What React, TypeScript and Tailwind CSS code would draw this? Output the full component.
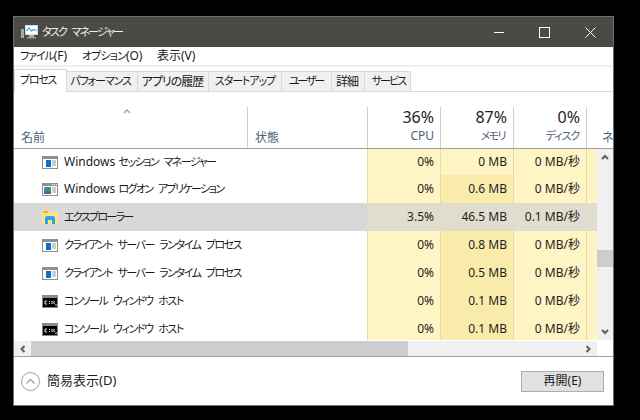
import type { ReactNode } from "react";

const font = "font-['Noto_Sans','Noto_Sans_CJK_JP',sans-serif] [font-feature-settings:'palt']";

const tabs = [
  { label: "パフォーマンス", width: "w-[71px]", track: "text-[11px] tracking-[-1.1px] pr-[3px]" },
  { label: "アプリの履歴", width: "w-[71px]", track: "tracking-[-1px] pr-[1px]" },
  { label: "スタートアップ", width: "w-[73px]", track: "text-[11px] tracking-[-1.1px]" },
  { label: "ユーザー", width: "w-[50px]", track: "text-[11px] tracking-[-2.1px] pr-[1px]" },
  { label: "詳細", width: "w-[33px]", track: "tracking-[-1px] pr-[2px]" },
  { label: "サービス", width: "w-[46px]", track: "text-[11px] tracking-[-1.9px] pl-[2px]" },
];

type Row = {
  prefix?: string;
  name: string;
  track: string;
  icon: "app" | "logon" | "folder" | "console";
  cpu: string;
  mem: string;
  disk: string;
  memDark?: boolean;
  selected?: boolean;
  height: string;
};

const rows: Row[] = [
  { prefix: "Windows ", name: "セッション マネージャー", track: "tracking-[-1.5px]", icon: "app", cpu: "0%", mem: "0 MB", disk: "0 MB/秒", height: "h-[26px]" },
  { prefix: "Windows ", name: "ログオン アプリケーション", track: "tracking-[-1.6px]", icon: "logon", cpu: "0%", mem: "0.6 MB", disk: "0 MB/秒", memDark: true, height: "h-[28px]" },
  { name: "エクスプローラー", track: "tracking-[-1.7px]", icon: "folder", cpu: "3.5%", mem: "46.5 MB", disk: "0.1 MB/秒", selected: true, height: "h-[28px]" },
  { name: "クライアント サーバー ランタイム プロセス", track: "tracking-[-1.5px]", icon: "app", cpu: "0%", mem: "0.8 MB", disk: "0 MB/秒", memDark: true, height: "h-[28px]" },
  { name: "クライアント サーバー ランタイム プロセス", track: "tracking-[-1.5px]", icon: "app", cpu: "0%", mem: "0.5 MB", disk: "0 MB/秒", memDark: true, height: "h-[28px]" },
  { name: "コンソール ウィンドウ ホスト", track: "tracking-[-1.4px]", icon: "console", cpu: "0%", mem: "0.1 MB", disk: "0 MB/秒", memDark: true, height: "h-[28px]" },
  { name: "コンソール ウィンドウ ホスト", track: "tracking-[-1.4px]", icon: "console", cpu: "0%", mem: "0.1 MB", disk: "0 MB/秒", memDark: true, height: "h-[28px]" },
];

function RowIcon({ kind }: { kind: Row["icon"] }) {
  if (kind === "folder") {
    return (
      <svg width="16" height="14" viewBox="0 0 16 14">
        <path d="M0 0h6l1.500 2H16v12H0z" fill="#fce08c" />
        <rect x="1" y="1" width="5" height="2" fill="#e6b32e" />
        <path d="M3 14V7.500L4.500 6h7L13 7.500V14h-3v-4H6v4z" fill="#2ba4e6" />
      </svg>
    );
  }
  if (kind === "console") {
    return (
      <svg width="16" height="13" viewBox="0 0 16 13">
        <rect width="16" height="13" fill="#8a8a8a" />
        <rect x="1" y="3" width="14" height="9" fill="#000" />
        <path d="M3 6H5M3 6V9H5M7 6.500h1M7 8.500h1M10 6v3M12 6v3M13 10h2" stroke="#e6e6e6" strokeWidth="1" fill="none" />
      </svg>
    );
  }
  return (
    <svg width="16" height="13" viewBox="0 0 16 13">
      <rect width="16" height="13" fill="#8f8f8f" />
      <rect x="1" y="3" width="14" height="9" fill="#fff" />
      {kind === "logon" ? (
        <>
          <rect x="2" y="4" width="7" height="4" fill="#3f8f8a" />
          <rect x="2" y="8" width="7" height="3" fill="#3c6fa8" />
          <rect x="10" y="1" width="1" height="1" fill="#fff" />
          <rect x="12" y="1" width="1" height="1" fill="#fff" />
          <rect x="14" y="1" width="1" height="1" fill="#fff" />
        </>
      ) : (
        <rect x="4" y="4" width="5" height="7" fill="#0b6fd0" />
      )}
      <path d="M10 5h4M10 7h4M10 9h4" stroke="#9a9a9a" strokeWidth="1" />
    </svg>
  );
}

function Chevron({ dir, color = "#606060", weight = 2 }: { dir: "up" | "down" | "left" | "right"; color?: string; weight?: number }) {
  const d = {
    up: "M2 7l3-3 3 3",
    down: "M2 3l3 3 3-3",
    left: "M6.500 2L3.500 5l3 3",
    right: "M3.500 2l3 3-3 3",
  }[dir];
  return (
    <svg width="10" height="10" viewBox="0 0 10 10">
      <path d={d} fill="none" stroke={color} strokeWidth={weight} />
    </svg>
  );
}

function HeaderCell({ pct, label, track = "text-[12px]" }: { pct: string; label: string; track?: string }) {
  return (
    <div className="w-[73px] h-full shrink-0 border-r border-[#d0d0d0] pr-[6px] flex flex-col items-end">
      <span className="text-[16px] leading-[20px] text-[#1e1e1e]">{pct}</span>
      <span className={`mt-[2px] leading-[14px] text-[#4c607a] ${track}`}>{label}</span>
    </div>
  );
}

function Cell({ children, bg, line }: { children: ReactNode; bg: string; line: string }) {
  return (
    <div className={`w-[73px] ${bg} ${line} h-full shrink-0 border-r pr-[6px] flex items-center justify-end text-[12px] text-[#1e1e1e]`}>
      {children}
    </div>
  );
}

export default function App() {
  return (
    <div className={`${font} w-[640px] h-[420px] bg-black pt-[16px] pl-[13px] overflow-hidden`}>
      <div className="w-[601px] h-[390px] border border-[#6f6f6f] bg-white flex flex-col">
        {/* Title bar */}
        <div className="h-[30px] shrink-0 bg-[#4b4a47] flex items-center text-[#f2f2f2]">
          <svg className="ml-[7px]" width="17" height="16" viewBox="0 0 17 16">
            <rect x="0" y="5" width="3" height="9" fill="#a8a8a8" />
            <rect x="1" y="6" width="1" height="2" fill="#6fd36f" />
            <rect x="4" y="1" width="13" height="10" fill="#d8d8d8" />
            <rect x="5" y="2" width="11" height="8" fill="#ffffff" />
            <path d="M5.500 7l2.500-3 2.500 3 2-1.500 3 1" fill="none" stroke="#2b8fd8" strokeWidth="1.100" />
            <rect x="8" y="11" width="5" height="2" fill="#b0b0b0" />
            <rect x="6" y="13" width="9" height="1.500" fill="#9a9a9a" />
          </svg>
          <span className="ml-[4px] text-[11px] tracking-[-1.7px] [word-spacing:4px]">タスク マネージャー</span>
          <div className="ml-auto flex items-center">
            <div className="w-[44px] flex justify-center">
              <div className="w-[10px] h-px bg-white" />
            </div>
            <div className="w-[46px] flex justify-center">
              <div className="w-[11px] h-[11px] border border-white" />
            </div>
            <div className="w-[46px] flex justify-center">
              <svg width="11" height="11" viewBox="0 0 11 11">
                <path d="M.5.500l10 10M10.500.500l-10 10" stroke="#fff" strokeWidth="1" />
              </svg>
            </div>
          </div>
        </div>

        {/* Menu */}
        <div className="h-[18px] shrink-0 flex items-center text-[12px] text-[#1a1a1a] pl-[6px] whitespace-nowrap">
          <span className="w-[62px]"><span className="text-[11px] tracking-[-1.1px]">ファイル</span>(F)</span>
          <span className="w-[75px]"><span className="text-[11px] tracking-[-0.9px]">オプション</span>(O)</span>
          <span>表示(V)</span>
        </div>
        <div className="h-[2px] shrink-0 bg-[#f0f0f0]" />

        {/* Tabs */}
        <div className="h-[25px] shrink-0 border-b border-[#d9d9d9] flex items-end text-[12px] text-[#1a1a1a] whitespace-nowrap">
          <div className="w-[53px] h-[23px] mb-[-1px] bg-white border border-b-0 border-[#d9d9d9] flex items-center justify-center shrink-0 pb-[2px] pr-[5px] text-[11px] tracking-[-1.3px]">
            プロセス
          </div>
          {tabs.map((t) => (
            <div key={t.label} className={`${t.width} ${t.track} h-[20px] bg-[#f0f0f0] border-r border-t border-[#d9d9d9] flex items-center justify-center shrink-0`}>
              {t.label}
            </div>
          ))}
        </div>

        {/* Column headers */}
        <div className="h-[57px] shrink-0 border-b border-[#a0a0a0] pt-[15px] flex items-stretch">
          <div className="w-[234px] shrink-0 border-r border-[#d0d0d0] relative flex items-end pl-[7px] pb-[3px] text-[12px] leading-[14px] text-[#4c607a]">
            名前
            <div className="absolute left-[108px] top-[-1px]">
              <Chevron dir="up" color="#a0a0a0" weight={1.3} />
            </div>
          </div>
          <div className="w-[120px] shrink-0 border-r border-[#d0d0d0] flex items-end pl-[7px] pb-[3px] text-[12px] leading-[14px] text-[#4c607a]">
            状態
          </div>
          <HeaderCell pct="36%" label="CPU" />
          <HeaderCell pct="87%" label="メモリ" track="text-[11px] tracking-[-1.6px] mr-[2px]" />
          <HeaderCell pct="0%" label="ディスク" track="text-[11px] tracking-[-1.1px] mr-[1px]" />
          <div className="flex-1 overflow-hidden flex items-end pb-[3px] pl-[15px] text-[12px] leading-[14px] text-[#4c607a] whitespace-nowrap">
            ネット
          </div>
        </div>

        {/* Process list */}
        <div className="h-[191px] shrink-0 flex">
          <div className="w-[583px] shrink-0 h-full overflow-hidden">
            {rows.map((r, i) => {
              const light = r.selected ? "bg-[#e0ddcf]" : "bg-[#fff4c4]";
              const mem = r.selected ? "bg-[#e0ddcf]" : r.memDark ? "bg-[#f9ecaa]" : "bg-[#fff4c4]";
              const line = r.selected ? "border-[#d8dcd8]" : "border-[#eed9a0]";
              return (
                <div key={i} className={`${r.height} flex items-center`}>
                  <div className={`w-[354px] h-full shrink-0 border-r ${line} flex items-center pl-[28px] text-[12px] text-[#1a1a1a] ${r.selected ? "bg-[#d8d8d8]" : ""}`}>
                    <div className="w-[16px] flex justify-center shrink-0">
                      <RowIcon kind={r.icon} />
                    </div>
                    <span className="ml-[6px] whitespace-pre">
                      {r.prefix}
                      <span className={`${r.track} text-[11px] [word-spacing:4px]`}>{r.name}</span>
                    </span>
                  </div>
                  <Cell bg={light} line={line}>{r.cpu}</Cell>
                  <Cell bg={mem} line={line}>{r.mem}</Cell>
                  <Cell bg={light} line={line}>{r.disk}</Cell>
                  <div className={`flex-1 h-full ${light}`} />
                </div>
              );
            })}
          </div>
          {/* Vertical scrollbar */}
          <div className="w-[16px] shrink-0 h-full bg-[#f0f0f0] flex flex-col items-center">
            <div className="h-[16px] flex items-center"><Chevron dir="up" /></div>
            <div className="w-full h-[17px] bg-[#cdcdcd] mt-[85px]" />
            <div className="h-[16px] flex items-center mt-auto"><Chevron dir="down" /></div>
          </div>
        </div>

        {/* Horizontal scrollbar */}
        <div className="h-[16px] shrink-0 flex pt-[1px]">
          <div className="w-[583px] h-[15px] bg-[#f0f0f0] flex">
            <div className="w-[17px] flex items-center justify-center"><Chevron dir="left" /></div>
            <div className="w-[377px] bg-[#cdcdcd]" />
            <div className="flex-1 flex items-center justify-end pr-[4px]"><Chevron dir="right" /></div>
          </div>
        </div>
        <div className="h-px shrink-0 bg-[#a0a0a0]" />

        {/* Footer */}
        <div className="flex-1 flex items-center justify-between pl-[7px] pr-[9px]">
          <div className="flex items-center text-[13px] text-[#1a1a1a]">
            <svg width="19" height="19" viewBox="0 0 19 19">
              <circle cx="9.500" cy="9.500" r="9" fill="none" stroke="#a0a0a0" />
              <path d="M5.500 11.500l4-4 4 4" fill="none" stroke="#a0a0a0" strokeWidth="1.300" />
            </svg>
            <span className="ml-[7px]">簡易表示(D)</span>
          </div>
          <div className="w-[83px] h-[21px] bg-[#e1e1e1] border border-[#adadad] flex items-center justify-center text-[12px] text-[#1a1a1a]">
            再開(E)
          </div>
        </div>
      </div>
    </div>
  );
}
